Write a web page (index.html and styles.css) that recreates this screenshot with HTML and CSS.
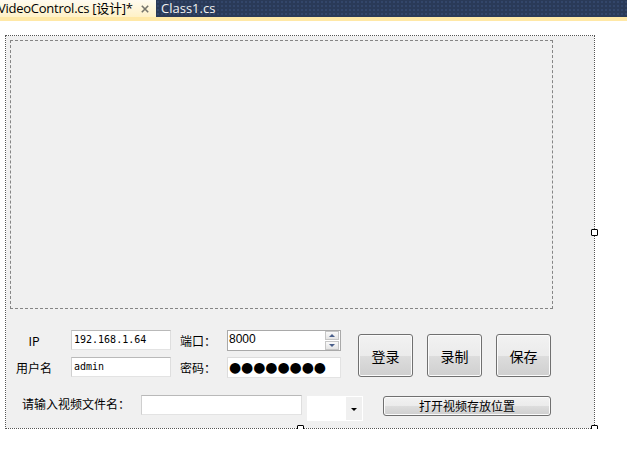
FILE: index.html
```html
<!DOCTYPE html>
<html lang="zh-CN">
<head>
<meta charset="utf-8">
<link rel="stylesheet" href="styles.css">
</head>
<body>
<div class="tabs">
  <div class="tab-active"><span class="tab-title">VideoControl.cs [设计]*</span><svg class="tab-close" width="8" height="8" viewBox="0 0 8 8"><path d="M0.8 0.8 L7.2 7.2 M7.2 0.8 L0.8 7.2" stroke="#76756c" stroke-width="1.6" fill="none"/></svg></div>
  <div class="tab">Class1.cs</div>
</div>
<div class="strip"></div>
<div class="form">
  <div class="panel"></div>
  <div class="ctrl-row">
    <div class="grid">
      <div class="lbl lbl-c">IP</div>
      <div class="cell"><div class="tb tb-w1 mono">192.168.1.64</div></div>
      <div class="lbl">端口：</div>
      <div class="num">
        <span class="num-val">8000</span>
        <div class="spin">
          <div class="spin-btn"><span class="tri-up"></span></div>
          <div class="spin-btn"><span class="tri-down"></span></div>
        </div>
      </div>
      <div class="lbl lbl-c">用户名</div>
      <div class="cell"><div class="tb tb-w1 mono">admin</div></div>
      <div class="lbl">密码：</div>
      <div class="pwd">●●●●●●●●</div>
    </div>
    <div class="btns">
      <button class="btn btn-big">登录</button>
      <button class="btn btn-big">录制</button>
      <button class="btn btn-big">保存</button>
    </div>
  </div>
  <div class="file-row">
    <div class="lbl file-lbl">请输入视频文件名：</div>
    <div class="tb tb-file"></div>
    <div class="combo"><div class="combo-drop"><span class="combo-arrow"></span></div></div>
    <button class="btn btn-open">打开视频存放位置</button>
  </div>
  <span class="handle h-right"></span>
  <span class="handle h-bottom"></span>
  <span class="handle h-corner"></span>
</div>
</body>
</html>
```

FILE: styles.css
```css
html, body {
  margin: 0;
  padding: 0;
  background: #ffffff;
  overflow: hidden;
  font-family: "Noto Sans CJK SC", "Noto Sans", sans-serif;
}

.tabs {
  height: 17px;
  display: flex;
  background-color: #2a3a58;
  background-image: radial-gradient(#33466a 0.8px, transparent 1px);
  background-size: 4px 4px;
  overflow: hidden;
}

.tab-active {
  width: 156px;
  flex: none;
  display: flex;
  align-items: center;
  background: linear-gradient(#fffbf0, #fff1c6);
  overflow: hidden;
}

.tab-title {
  margin-left: -2px;
  font-family: "Open Sans", "Noto Sans CJK SC", sans-serif;
  font-size: 13px;
  line-height: 17px;
  color: #000;
  white-space: nowrap;
  letter-spacing: -0.25px;
}

.tab-close {
  flex: none;
  margin-left: 8px;
  margin-top: 1px;
}

.tab {
  padding-left: 5px;
  font-family: "Open Sans", sans-serif;
  font-size: 13px;
  line-height: 16px;
  color: #f2f2f2;
  white-space: nowrap;
}

.strip {
  height: 4px;
  background: #ffe8a6;
}

.form {
  position: relative;
  margin: 14px 0 0 5px;
  width: 590px;
  height: 394px;
  box-sizing: border-box;
  border: 1px dotted #555;
  background: #f0f0f0;
  background-clip: padding-box;
  padding: 4px 0 0 4px;
}

.panel {
  width: 543px;
  height: 269px;
  box-sizing: border-box;
  border: 1px dashed #858585;
}

.ctrl-row {
  display: flex;
  align-items: flex-start;
  margin-top: 21px;
}

.grid {
  display: grid;
  grid-template-columns: 61px 109px 47px 114px;
  grid-template-rows: 21px 21px;
  row-gap: 6px;
}

.lbl {
  font-size: 12px;
  color: #000;
  line-height: 21px;
  white-space: nowrap;
}

.lbl-c {
  width: 48px;
  text-align: center;
}

.tb {
  box-sizing: border-box;
  height: 20px;
  background: #fff;
  border: 1px solid;
  border-color: #b9b9b9 #dedede #e3e3e3 #cfcfcf;
}

.tb-w1 {
  width: 100px;
}

.mono {
  font-family: "DejaVu Sans Mono", "Liberation Mono", monospace;
  font-size: 10px;
  line-height: 18px;
  padding-left: 2px;
  color: #000;
}

.num {
  box-sizing: border-box;
  width: 114px;
  height: 21px;
  background: #fff;
  border: 1px solid #a9a9a9;
  display: flex;
  justify-content: space-between;
}

.num-val {
  font-family: "Liberation Sans", sans-serif;
  font-size: 12px;
  line-height: 16px;
  padding-left: 1px;
  color: #000;
}

.spin {
  width: 14px;
  display: flex;
  flex-direction: column;
  gap: 1px;
  padding: 0 1px 0 0;
}

.spin-btn {
  flex: 1;
  box-sizing: border-box;
  border: 1px solid #c6c6c6;
  background: linear-gradient(#fafafa, #e4e4e4);
  display: flex;
  align-items: center;
  justify-content: center;
}

.tri-up {
  width: 0;
  height: 0;
  border-left: 3px solid transparent;
  border-right: 3px solid transparent;
  border-bottom: 3px solid #4a5f8a;
}

.tri-down {
  width: 0;
  height: 0;
  border-left: 3px solid transparent;
  border-right: 3px solid transparent;
  border-top: 3px solid #4a5f8a;
}

.pwd {
  box-sizing: border-box;
  width: 114px;
  height: 21px;
  background: #fff;
  border: 1px solid;
  border-color: #dcdcdc #e3e3e3 #e3e3e3 #dcdcdc;
  font-family: "DejaVu Sans", sans-serif;
  font-size: 14px;
  line-height: 19px;
  letter-spacing: -0.1px;
  padding-left: 1px;
  color: #000;
  white-space: nowrap;
  overflow: hidden;
}

.btns {
  display: flex;
  gap: 14px;
  margin-left: 17px;
  margin-top: 4px;
}

.btn {
  box-sizing: border-box;
  padding: 0;
  margin: 0;
  border: 1px solid #707070;
  border-radius: 3px;
  background: linear-gradient(#f2f2f2 0%, #ebebeb 50%, #dddddd 50%, #cfcfcf 100%);
  box-shadow: inset 0 0 0 1px #fbfbfb;
  font-family: "Noto Sans CJK SC", sans-serif;
  color: #000;
}

.btn-big {
  width: 55px;
  height: 43px;
  font-size: 14px;
}

.file-row {
  display: flex;
  align-items: flex-start;
  margin-top: 17px;
}

.file-lbl {
  width: 131px;
  padding-left: 12px;
  box-sizing: border-box;
  line-height: 18px;
}

.tb-file {
  width: 161px;
}

.combo {
  width: 56px;
  height: 25px;
  margin-left: 5px;
  margin-top: 1px;
  background: #fff;
  display: flex;
  justify-content: flex-end;
  padding: 1px;
  box-sizing: border-box;
}

.combo-drop {
  width: 16px;
  background: #f0f0f0;
  display: flex;
  align-items: center;
  justify-content: center;
}

.combo-arrow {
  width: 0;
  height: 0;
  border-left: 3px solid transparent;
  border-right: 3px solid transparent;
  border-top: 3px solid #000;
  margin-top: 1px;
}

.btn-open {
  width: 168px;
  height: 20px;
  margin-left: 20px;
  margin-top: 1px;
  font-size: 12px;
  line-height: 16px;
}

.handle {
  position: absolute;
  width: 7px;
  height: 7px;
  box-sizing: border-box;
  border: 1px solid #000;
  border-radius: 1px;
  background: #fff;
}

.h-right {
  left: 585px;
  top: 193px;
}

.h-bottom {
  left: 291px;
  top: 389px;
}

.h-corner {
  left: 585px;
  top: 389px;
}
```
